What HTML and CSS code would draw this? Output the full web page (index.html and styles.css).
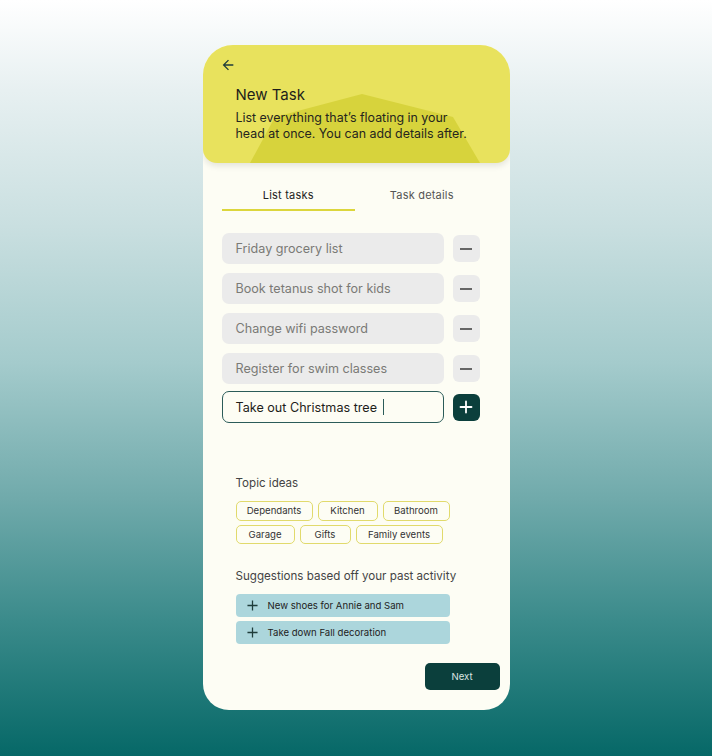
FILE: index.html
```html
<!DOCTYPE html>
<html>
<head>
<meta charset="utf-8">
<link rel="stylesheet" href="styles.css">
</head>
<body>
<div class="page">
  <div class="card">
    <header class="head">
      <svg class="shape" viewBox="0 0 307 118" preserveAspectRatio="none"><polygon points="159,49 72,72 47,118 277,118 250,72" fill="#d7d33c"/></svg>
      <svg class="back" viewBox="0 0 24 24" width="16" height="16"><path d="M20 11H7.83l5.59-5.59L12 4l-8 8 8 8 1.41-1.41L7.83 13H20v-2z" fill="#1f3d3b"/></svg>
      <h1 class="title">New Task</h1>
      <p class="desc">List everything that’s floating in your head at once. You can add details after.</p>
    </header>

    <nav class="tabs">
      <div class="tab active">List tasks</div>
      <div class="tab">Task details</div>
    </nav>

    <div class="list">
      <div class="row"><div class="field">Friday grocery list</div><button class="btn minus"><span></span></button></div>
      <div class="row"><div class="field">Book tetanus shot for kids</div><button class="btn minus"><span></span></button></div>
      <div class="row"><div class="field">Change wifi password</div><button class="btn minus"><span></span></button></div>
      <div class="row"><div class="field">Register for swim classes</div><button class="btn minus"><span></span></button></div>
      <div class="row current"><div class="field active">Take out Christmas tree<span class="caret"></span></div><button class="btn plus"><svg viewBox="0 0 14 14" width="14" height="14"><path d="M7 1.5v11M1.5 7h11" stroke="#fff" stroke-width="1.8" stroke-linecap="round"/></svg></button></div>
    </div>

    <section class="topics">
      <h2 class="label">Topic ideas</h2>
      <div class="chips">
        <span class="chip">Dependants</span>
        <span class="chip">Kitchen</span>
        <span class="chip">Bathroom</span>
        <span class="chip">Garage</span>
        <span class="chip">Gifts</span>
        <span class="chip">Family events</span>
      </div>
    </section>

    <section class="suggest">
      <h2 class="label">Suggestions based off your past activity</h2>
      <div class="sugg"><svg viewBox="0 0 12 12" width="11" height="11"><path d="M6 .5v11M.5 6h11" stroke="#1f3d3b" stroke-width="1.4"/></svg>New shoes for Annie and Sam</div>
      <div class="sugg"><svg viewBox="0 0 12 12" width="11" height="11"><path d="M6 .5v11M.5 6h11" stroke="#1f3d3b" stroke-width="1.4"/></svg>Take down Fall decoration</div>
    </section>

    <div class="foot"><button class="next">Next</button></div>
  </div>
</div>
</body>
</html>
```

FILE: styles.css
```css
* { box-sizing: border-box; }
html, body { margin: 0; padding: 0; }
body {
  font-family: "Inter", "Noto Sans", sans-serif;
  background: linear-gradient(180deg, #ffffff 0%, #e7f0f1 12%, #c9dfe0 30%, #a4cbcc 48%, #70aaab 66%, #3b8b8b 82%, #066867 100%);
  min-height: 756px;
}
.page {
  display: flex;
  justify-content: center;
  padding-top: 45px;
  height: 756px;
}
.card {
  width: 307px;
  height: 665px;
  background: #fdfdf4;
  border-radius: 30px 30px 26px 26px;
  overflow: hidden;
  display: flex;
  flex-direction: column;
}
.head {
  position: relative;
  height: 118px;
  background: #e8e25d;
  border-radius: 0 0 14px 14px;
  box-shadow: 0 3px 6px rgba(0,0,0,0.10);
  padding: 12px 30px 0 33px;
  flex-shrink: 0;
}
.shape { position: absolute; left: 0; top: 0; width: 100%; height: 100%; }
.back { position: relative; display: block; margin-left: -16px; }
.title {
  position: relative;
  margin: 12px 0 0;
  font-size: 15px;
  font-weight: 400;
  color: #1e1e1a;
  line-height: 20px;
}
.desc {
  position: relative;
  margin: 5px 0 0;
  font-size: 12.4px;
  line-height: 16px;
  color: #25251e;
}
.tabs {
  display: flex;
  margin: 21px 21px 0 19px;
}
.tab {
  flex: 1;
  text-align: center;
  font-size: 11px;
  line-height: 22px;
  padding-bottom: 3px;
  color: #555;
  border-bottom: 2px solid transparent;
  letter-spacing: 0.2px;
}
.tab.active { color: #222; border-bottom-color: #dcd63c; }
.list {
  display: flex;
  flex-direction: column;
  gap: 9px;
  margin: 22px 0 0 19px;
}
.row {
  display: flex;
  align-items: center;
  gap: 9px;
}
.row.current { margin-top: -2px; }
.field {
  width: 222px;
  height: 31px;
  border-radius: 7px;
  background: #ebebeb;
  font-size: 12.6px;
  color: #7a7a76;
  padding-left: 14px;
  display: flex;
  align-items: center;
}
.field.active {
  height: 32px;
  background: #fdfdf4;
  border: 1px solid #2b5c59;
  padding-left: 13px;
  color: #1e1e1a;
}
.caret {
  display: inline-block;
  width: 1px;
  height: 16px;
  background: #2b5c59;
  margin-left: 6px;
}
.btn {
  width: 27px;
  height: 27px;
  border: 0;
  border-radius: 6px;
  padding: 0;
  display: flex;
  align-items: center;
  justify-content: center;
}
.minus { background: #ebebeb; }
.minus span { display: block; width: 12px; height: 2px; background: #666; }
.plus { background: #0b3f3c; }
.topics { margin: 52px 0 0 33px; }
.label {
  margin: 0;
  font-size: 11.6px;
  font-weight: 400;
  color: #444;
  line-height: 16px;
}
.chips {
  display: flex;
  flex-wrap: wrap;
  gap: 4px 5px;
  width: 230px;
  margin-top: 10px;
}
.chip {
  height: 19.5px;
  border: 1px solid #e1da6c;
  border-radius: 5px;
  font-size: 9.6px;
  color: #333;
  display: flex;
  align-items: center;
  justify-content: center;
}
.chip:nth-child(1) { width: 77px; }
.chip:nth-child(2) { width: 60px; }
.chip:nth-child(3) { width: 67px; }
.chip:nth-child(4) { width: 59px; }
.chip:nth-child(5) { width: 51px; }
.chip:nth-child(6) { width: 87px; }
.suggest { margin: 24px 0 0 33px; }
.suggest .label { margin-bottom: 10px; }
.sugg {
  width: 214px;
  height: 22.5px;
  background: #acd6dc;
  border-radius: 4px;
  font-size: 9.6px;
  color: #222;
  display: flex;
  align-items: center;
  padding-left: 11px;
  margin-bottom: 4.5px;
}
.sugg svg { margin-right: 10px; }
.foot {
  display: flex;
  justify-content: flex-end;
  padding-right: 10px;
  margin-top: 15px;
}
.next {
  width: 75px;
  height: 27px;
  border: 0;
  border-radius: 5px;
  background: #0b3f3c;
  color: #d9e4e2;
  font-family: inherit;
  font-size: 9.6px;
}
```
